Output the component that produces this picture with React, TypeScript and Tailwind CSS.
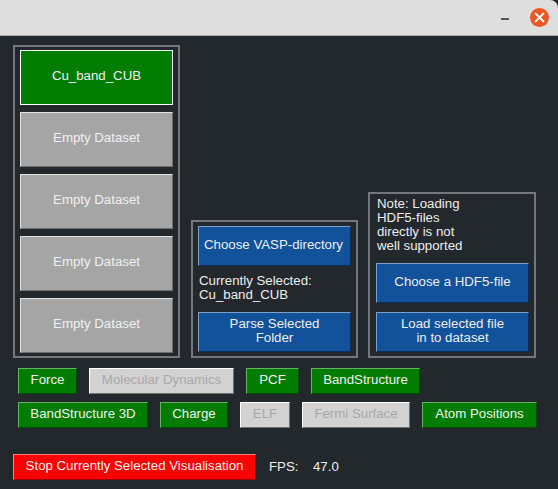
import React from "react";

const base = "flex items-center justify-center text-center border-[1.5px] leading-[14px] whitespace-pre-line";
const gray = `${base} w-[153px] h-[55px] pb-[3px] bg-[#a5a5a5] border-t-[#e3e3e3] border-l-[#e3e3e3] border-b-[#6f6f6f] border-r-[#6f6f6f] text-[#f0f0f0]`;
const blue = `${base} w-[153px] h-[40px] pb-[2px] bg-[#11529a] border-t-[#7f9fc8] border-l-[#7f9fc8] border-b-[#0a2f5a] border-r-[#0a2f5a] text-[#eeeeee]`;
const on = `${base} h-[26px] pb-[2px] bg-[#007d00] border-t-[#66b266] border-l-[#66b266] border-b-[#004f00] border-r-[#004f00] text-[#f2f2f2]`;
const off = `${base} h-[26px] pb-[2px] bg-[#d2d2d2] border-t-[#ffffff] border-l-[#ffffff] border-b-[#707070] border-r-[#707070] text-[#a8a8a8]`;
const panel = "border-2 border-[#74787c]";

export default function App() {
  return (
    <div className="w-[558px] h-[489px] bg-[#23282d] overflow-hidden flex flex-col text-[13.25px] text-[#eeeeee] font-['Liberation_Sans',Arial,sans-serif]">
      <div className="h-[36px] shrink-0 bg-[#dedede] border-b border-b-[#a8a8a8] rounded-tr-[8px] flex items-center justify-end pr-[9px] gap-[21px]">
        <div className="w-[8px] h-[2px] bg-[#555555] mt-[3px]" />
        <div className="w-[19px] h-[19px] rounded-full bg-[#ee5622] flex items-center justify-center">
          <svg width="11" height="11" viewBox="0 0 11 11">
            <path d="M1.5 1.5L9.5 9.5M9.5 1.5L1.5 9.5" stroke="#ffffff" strokeWidth="1.8" strokeLinecap="round" />
          </svg>
        </div>
      </div>

      <div className="pl-[13px] pt-[9px] flex items-end gap-[11px] h-[322px] shrink-0">
        <div className={`${panel} w-[167px] h-[313px] pl-[5px] pt-[3px] flex flex-col gap-[7px]`}>
          <div className={`${base} w-[153px] h-[55px] pb-[3px] bg-[#007d00] border-white text-[#f0f0f0]`}>Cu_band_CUB</div>
          <div className={gray}>Empty Dataset</div>
          <div className={gray}>Empty Dataset</div>
          <div className={gray}>Empty Dataset</div>
          <div className={gray}>Empty Dataset</div>
        </div>

        <div className={`${panel} w-[167px] h-[138px] pl-[5px] pt-[4px] flex flex-col`}>
          <div className={`${blue} pr-[2px]`}>Choose VASP-directory</div>
          <div className="pl-[1px] pt-[8px] h-[46px] leading-[14px]">
            Currently Selected:
            <br />
            Cu_band_CUB
          </div>
          <div className={blue}>{"Parse Selected\nFolder"}</div>
        </div>

        <div className={`${panel} ml-[-1px] w-[168px] h-[166px] pl-[6px] pt-[3px] flex flex-col`}>
          <div className="pl-[1px] h-[66px] leading-[14px]">
            Note: Loading
            <br />
            HDF5-files
            <br />
            directly is not
            <br />
            well supported
          </div>
          <div className={blue}>Choose a HDF5-file</div>
          <div className={`${blue} mt-[9px]`}>{"Load selected file\nin to dataset"}</div>
        </div>
      </div>

      <div className="pl-[18px] pt-[10px] flex flex-col gap-[8px]">
        <div className="flex gap-[12px]">
          <div className={`${on} w-[59px]`}>Force</div>
          <div className={`${off} w-[145px]`}>Molecular Dynamics</div>
          <div className={`${on} w-[53px]`}>PCF</div>
          <div className={`${on} w-[109px]`}>BandStructure</div>
        </div>
        <div className="flex gap-[12px]">
          <div className={`${on} w-[130px]`}>BandStructure 3D</div>
          <div className={`${on} w-[68px]`}>Charge</div>
          <div className={`${off} w-[50px]`}>ELF</div>
          <div className={`${off} w-[108px]`}>Fermi Surface</div>
          <div className={`${on} w-[115px]`}>Atom Positions</div>
        </div>
      </div>

      <div className="pl-[13px] pt-[26px] flex items-center">
        <div className={`${base} w-[243px] h-[26px] pb-[2px] bg-[#ff0000] border-t-[#ff8080] border-l-[#ff8080] border-b-[#a00000] border-r-[#a00000] text-[#f4f4f4]`}>
          Stop Currently Selected Visualisation
        </div>
        <span className="ml-[13px] w-[44px]">FPS:</span>
        <span>47.0</span>
      </div>
    </div>
  );
}
